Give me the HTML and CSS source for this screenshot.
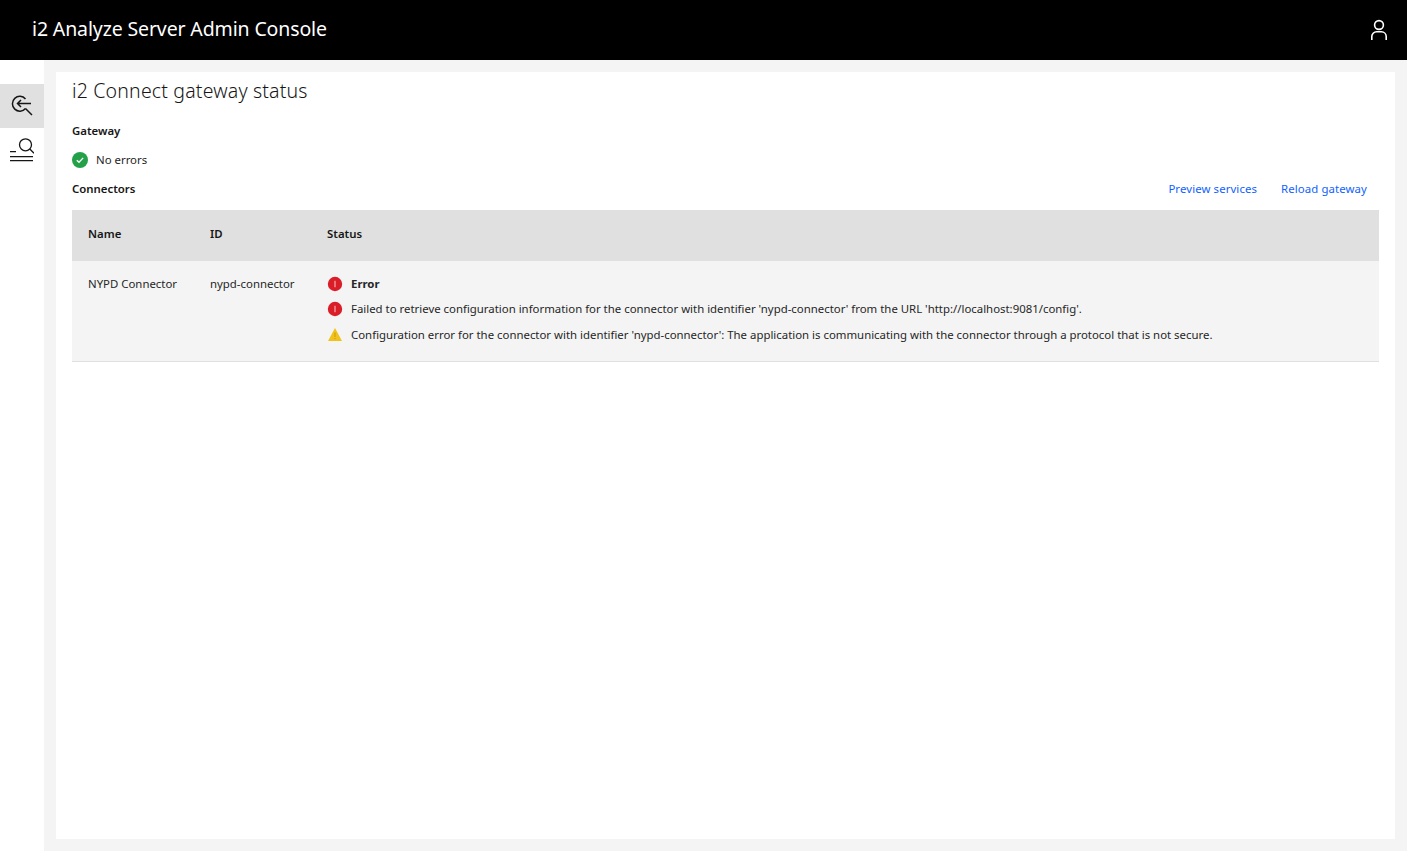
FILE: index.html
```html
<!DOCTYPE html>
<html lang="en">

<head>
    <meta charset="UTF-8">
    <title>i2 Analyze Server Admin Console</title>
    <link rel="stylesheet" href="styles.css">
</head>

<body>
    <header class="topbar">
        <div class="product-name">i2 Analyze Server Admin Console</div>
        <svg class="user-icon" viewBox="0 0 24 24" width="24" height="24" fill="none" stroke="#fff" stroke-width="1.6">
            <circle cx="12" cy="7" r="4.4" />
            <path d="M4.8 22v-3.4a4.8 4.8 0 0 1 4.8-4.8h4.8a4.8 4.8 0 0 1 4.8 4.8V22" />
        </svg>
    </header>

    <div class="main">
        <nav class="sidebar">
            <div class="nav-item selected">
                <svg viewBox="0 0 24 24" width="24" height="24" fill="none" stroke="#161616" stroke-width="1.5">
                    <path d="M15.500 5a7.400 7.400 0 1 0 0 9.500" />
                    <path d="M21 9.500H7.500M11 6 7.500 9.500 11 13" />
                    <path d="M15.500 14.500 22 21" />
                </svg>
            </div>
            <div class="nav-item">
                <svg viewBox="0 0 24 24" width="24" height="24" fill="none" stroke="#161616" stroke-width="1.3">
                    <circle cx="15.500" cy="6.800" r="6" />
                    <path d="M19.800 11 24 15.200M0 13.700h6M0 18.700h23M0 22.700h23" />
                </svg>
            </div>
        </nav>

        <main class="content">
            <h1>i2 Connect gateway status</h1>

            <h2 class="gateway-title">Gateway</h2>
            <div class="status-line gateway-status">
                <svg class="status-icon" viewBox="0 0 16 16" width="16" height="16">
                    <circle cx="8" cy="8" r="8" fill="#24a148" />
                    <path d="M4.800 8.200 7 10.300l4.200-4.400" fill="none" stroke="#fff" stroke-width="1.300" />
                </svg>
                <span>No errors</span>
            </div>

            <div class="connectors-head">
                <h2>Connectors</h2>
                <div class="actions">
                    <a href="#">Preview services</a>
                    <a href="#">Reload gateway</a>
                </div>
            </div>

            <table class="connectors">
                <thead>
                    <tr>
                        <th class="col-name">Name</th>
                        <th class="col-id">ID</th>
                        <th>Status</th>
                    </tr>
                </thead>
                <tbody>
                    <tr>
                        <td>NYPD Connector</td>
                        <td>nypd-connector</td>
                        <td class="status-cell">
                            <div class="status-line msg-first">
                                <svg class="status-icon" viewBox="0 0 16 16" width="16" height="16">
                                    <circle cx="8" cy="8" r="7.200" fill="#da1e28" />
                                    <rect x="7.500" y="4.800" width="1" height="6.400" fill="#f7c5c8" />
                                </svg>
                                <strong>Error</strong>
                            </div>
                            <div class="status-line msg-second">
                                <svg class="status-icon" viewBox="0 0 16 16" width="16" height="16">
                                    <circle cx="8" cy="8" r="7.200" fill="#da1e28" />
                                    <rect x="7.500" y="4.800" width="1" height="6.400" fill="#f7c5c8" />
                                </svg>
                                <span>Failed to retrieve configuration information for the connector with identifier 'nypd-connector' from the URL 'http://localhost:9081/config'.</span>
                            </div>
                            <div class="status-line msg-third">
                                <svg class="status-icon" viewBox="0 0 16 16" width="16" height="16">
                                    <path d="M8 1 15 14H1z" fill="#f1c21b" />
                                    <rect x="7.500" y="5.500" width="1" height="4.500" fill="#c9a000" />
                                    <rect x="7.500" y="11" width="1" height="1.200" fill="#c9a000" />
                                </svg>
                                <span>Configuration error for the connector with identifier 'nypd-connector': The application is communicating with the connector through a protocol that is not secure.</span>
                            </div>
                        </td>
                    </tr>
                </tbody>
            </table>
        </main>
    </div>
</body>

</html>
```

FILE: styles.css
```css
html,
body {
    height: 100%;
}

body {
    margin: 0;
    display: flex;
    flex-direction: column;
    font-family: "Noto Sans", "Open Sans", Arial, sans-serif;
    font-size: 11.4px;
    line-height: 16px;
    color: #262626;
    background-color: #f4f4f4;
    overflow: hidden;
}

.topbar {
    height: 60px;
    flex: none;
    display: flex;
    align-items: center;
    justify-content: space-between;
    padding: 0 16px 0 32px;
    background-color: #000;
    color: #fff;
}

.product-name {
    padding-bottom: 2px;
    font-size: 19.500px;
    letter-spacing: -0.13px;
}

.user-icon {
    display: block;
}

.main {
    flex: 1;
    display: flex;
    min-height: 0;
}

.sidebar {
    width: 44px;
    flex: none;
    padding-top: 24px;
    background-color: #fff;
}

.nav-item {
    height: 44px;
    display: flex;
    align-items: center;
    justify-content: center;
}

.nav-item.selected {
    background-color: #e0e0e0;
}

.content {
    flex: 1;
    margin: 12px;
    padding: 0 16px;
    background-color: #fff;
}

h1 {
    margin: 0;
    padding-top: 6px;
    font-size: 19.500px;
    line-height: 26px;
    font-weight: 300;
    letter-spacing: 0.18px;
    color: #161616;
}

h2 {
    margin: 0;
    font-size: 11.400px;
    line-height: 16px;
    font-weight: 600;
    color: #161616;
}

.gateway-title {
    margin-top: 19px;
}

.status-line {
    display: flex;
    align-items: center;
    gap: 8px;
}

.status-icon {
    flex: none;
}

.gateway-status {
    margin-top: 13px;
}

.connectors-head {
    display: flex;
    justify-content: space-between;
    align-items: center;
    margin-top: 13px;
    height: 16px;
}

.actions {
    display: flex;
    gap: 24px;
    padding-right: 12px;
    letter-spacing: 0.1px;
}

.actions a {
    color: #0f62fe;
    text-decoration: none;
}

.connectors {
    width: 100%;
    margin-top: 13px;
    border-collapse: collapse;
    table-layout: fixed;
}

.connectors th {
    height: 51px;
    box-sizing: border-box;
    padding: 0 16px 4px;
    text-align: left;
    font-weight: 600;
    color: #161616;
    background-color: #e0e0e0;
}

.connectors th.col-name {
    width: 122px;
}

.connectors th.col-id {
    width: 117px;
}

.connectors td {
    height: 100px;
    box-sizing: border-box;
    padding: 15px 16px 0;
    vertical-align: top;
    white-space: nowrap;
    background-color: #f4f4f4;
    border-bottom: 1px solid #e0e0e0;
}

.connectors td.status-cell {
    padding-top: 0;
}

.msg-first {
    margin-top: 15px;
}

.msg-second {
    margin-top: 9px;
}

.msg-third {
    margin-top: 10px;
}
```
